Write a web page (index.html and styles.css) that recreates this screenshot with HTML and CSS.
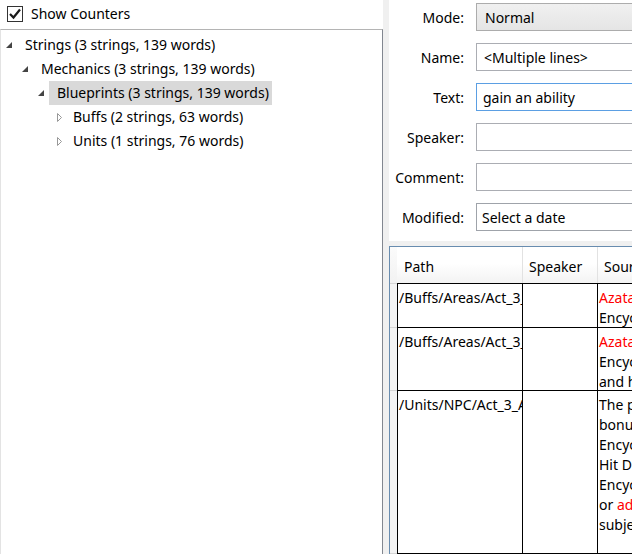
FILE: index.html
```html
<!DOCTYPE html>
<html>
<head>
<meta charset="utf-8">
<link rel="stylesheet" href="styles.css">
</head>
<body>
<div class="app">
  <div class="left">
    <div class="counter">
      <span class="check"><svg width="14" height="14" viewBox="0 0 14 14"><path d="M2 7 L5.5 10.5 L12 2.5" fill="none" stroke="#1a1a1a" stroke-width="2.2"/></svg></span>
      <span>Show Counters</span>
    </div>
    <div class="tree">
      <div class="node l0"><span class="exp"><svg width="16" height="16" viewBox="0 0 16 16"><polygon points="11,5 11,11 5,11" fill="#444"/></svg></span><span class="label">Strings (3 strings, 139 words)</span></div>
      <div class="node l1"><span class="exp"><svg width="16" height="16" viewBox="0 0 16 16"><polygon points="11,5 11,11 5,11" fill="#444"/></svg></span><span class="label">Mechanics (3 strings, 139 words)</span></div>
      <div class="node l2"><span class="exp"><svg width="16" height="16" viewBox="0 0 16 16"><polygon points="11,5 11,11 5,11" fill="#444"/></svg></span><span class="label selected">Blueprints (3 strings, 139 words)</span></div>
      <div class="node l3"><span class="exp"><svg width="16" height="16" viewBox="0 0 16 16"><polygon points="8.5,4.5 8.5,12.5 12.5,8.5" fill="#fff" stroke="#989898"/></svg></span><span class="label">Buffs (2 strings, 63 words)</span></div>
      <div class="node l3"><span class="exp"><svg width="16" height="16" viewBox="0 0 16 16"><polygon points="8.5,4.5 8.5,12.5 12.5,8.5" fill="#fff" stroke="#989898"/></svg></span><span class="label">Units (1 strings, 76 words)</span></div>
    </div>
  </div>
  <div class="splitter"></div>
  <div class="right">
    <div class="form">
      <div class="lbl">Mode:</div><div class="field combo">Normal</div>
      <div class="lbl">Name:</div><div class="field text">&lt;Multiple lines&gt;</div>
      <div class="lbl">Text:</div><div class="field text focus">gain an ability</div>
      <div class="lbl">Speaker:</div><div class="field text"></div>
      <div class="lbl">Comment:</div><div class="field text"></div>
      <div class="lbl">Modified:</div><div class="field date">Select a date</div>
    </div>
    <div class="grid">
      <div class="ghead">
        <div class="rh"></div>
        <div class="hc c-path">Path</div>
        <div class="hc c-spk">Speaker</div>
        <div class="hc c-src">Source</div>
      </div>
      <div class="grow first r1">
        <div class="rh"></div>
        <div class="cell c-path"><div class="ln">/Buffs/Areas/Act_3_Azata</div></div>
        <div class="cell c-spk"></div>
        <div class="cell c-src"><div class="ln"><span class="red">Azata</span> Superpower</div><div class="ln">Encyclopedia:Azata</div></div>
      </div>
      <div class="grow r2">
        <div class="rh"></div>
        <div class="cell c-path"><div class="ln">/Buffs/Areas/Act_3_Azata</div></div>
        <div class="cell c-spk"></div>
        <div class="cell c-src"><div class="ln"><span class="red">Azata</span> Blessing</div><div class="ln">Encyclopedia:Azata</div><div class="ln">and his allies</div></div>
      </div>
      <div class="grow r3">
        <div class="rh"></div>
        <div class="cell c-path"><div class="ln">/Units/NPC/Act_3_Azata</div></div>
        <div class="cell c-spk"></div>
        <div class="cell c-src"><div class="ln">The power</div><div class="ln">bonus to</div><div class="ln">Encyclopedia</div><div class="ln">Hit Dice</div><div class="ln">Encyclopedia</div><div class="ln">or <span class="red">additional</span></div><div class="ln">subject</div></div>
      </div>
    </div>
  </div>
</div>
</body>
</html>
```
FILE: styles.css
```css
html, body {
  margin: 0;
  padding: 0;
  background: #fff;
}
body {
  font-family: "Noto Sans", "Open Sans", sans-serif;
  font-size: 14px;
  color: #000;
}
.app {
  display: flex;
  width: 632px;
  height: 554px;
  overflow: hidden;
}
.left {
  width: 383px;
  flex: none;
  display: flex;
  flex-direction: column;
  background: #fff;
}
.counter {
  height: 29px;
  display: flex;
  align-items: center;
  gap: 8px;
  padding-left: 7px;
  box-sizing: border-box;
  padding-bottom: 2px;
}
.check {
  width: 16px;
  height: 16px;
  box-sizing: border-box;
  border: 1px solid #333;
  background: #fff;
  display: flex;
  align-items: center;
  justify-content: center;
}
.check svg { display: block; }
.tree {
  flex: 1;
  border-top: 1px solid #b4b4b4;
  border-left: 1px solid #e3e3e3;
  border-right: 1px solid #828790;
  padding-top: 3px;
}
.node {
  height: 24px;
  display: flex;
  align-items: center;
}
.l0 { padding-left: 0; }
.l1 { padding-left: 16px; }
.l2 { padding-left: 32px; }
.l3 { padding-left: 48px; }
.exp {
  width: 16px;
  height: 16px;
  flex: none;
}
.exp svg { display: block; }
.label {
  height: 24px;
  line-height: 24px;
  padding: 0 3px 0 8px;
  white-space: nowrap;
}
.selected {
  background: #d9d9d9;
}
.splitter {
  width: 6px;
  flex: none;
  background: #f0f0f0;
}
.right {
  flex: 1;
  min-width: 0;
  background: #f0f0f0;
  display: flex;
  flex-direction: column;
  overflow: hidden;
}
.form {
  height: 241px;
  flex: none;
  background: #fff;
  display: grid;
  grid-template-columns: 75px 200px;
  grid-auto-rows: 28px;
  column-gap: 12px;
  row-gap: 12px;
  padding-top: 3px;
  box-sizing: border-box;
}
.lbl {
  text-align: right;
  line-height: 30px;
  white-space: nowrap;
}
.field {
  box-sizing: border-box;
  height: 28px;
  line-height: 26px;
  padding-top: 1px;
  border: 1px solid #abadb3;
  background: #fff;
  white-space: nowrap;
  padding-left: 7px;
  overflow: hidden;
}
.combo {
  background: linear-gradient(#f0f0f0, #e5e5e5);
  border-color: #acacac;
  padding-left: 8px;
}
.text { padding-left: 7px; }
.focus { border-color: #5b9fe3; padding-left: 6px; }
.date { border-color: #9fa3aa; padding-left: 5px; }
.grid {
  margin-top: 5px;
  flex: 1;
  width: 420px;
  background: #fff;
  border-top: 1px solid #688caf;
  border-left: 1px solid #688caf;
  display: flex;
  flex-direction: column;
}
.ghead {
  height: 36px;
  display: flex;
  flex: none;
}
.grow {
  display: flex;
  flex: none;
}
.rh {
  width: 7px;
  flex: none;
  background: #f4f4f4;
  box-sizing: border-box;
}
.grow .rh { border-bottom: 1px solid #d5d5d5; }
.ghead .rh { background: linear-gradient(#fbfbfb, #f2f2f2); }
.hc {
  flex: none;
  box-sizing: border-box;
  background: linear-gradient(#ffffff 45%, #f3f3f3);
  border-right: 1px solid #e2e2e2;
  line-height: 36px;
  padding-top: 2px;
  padding-left: 6px;
  white-space: nowrap;
}
.hc.c-path { width: 126px; padding-left: 7px; }
.hc.c-spk { width: 75px; }
.hc.c-src { width: 200px; }
.cell {
  flex: none;
  box-sizing: border-box;
  border-right: 1px solid #000;
  border-bottom: 1px solid #000;
  padding: 4px 0 0 1px;
  overflow: hidden;
  line-height: 20px;
}
.ln { white-space: nowrap; }
.first .cell { border-top: 1px solid #000; }
.first .rh { border-top: 1px solid #d5d5d5; }
.cell.c-path { width: 126px; border-left: 1px solid #000; }
.cell.c-spk { width: 75px; }
.cell.c-src { width: 200px; }
.r1 .cell { height: 45px; }
.r1 .rh { height: 45px; }
.r2 .cell, .r2 .rh { height: 63px; }
.r3 .cell, .r3 .rh { height: 163px; }
.red { color: #f00; }
```
